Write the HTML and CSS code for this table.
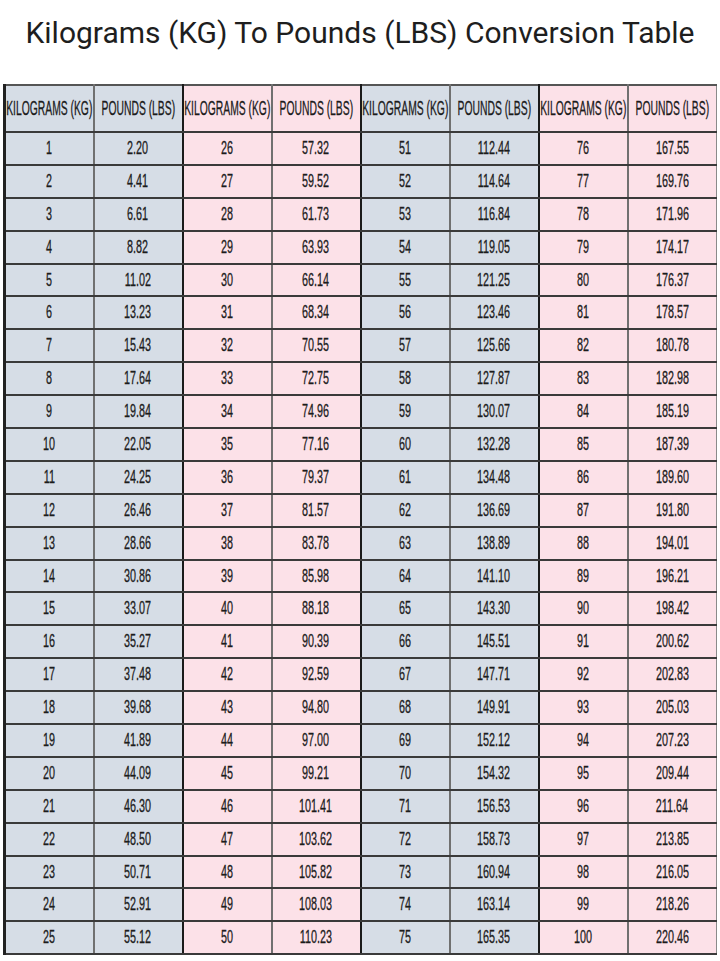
FILE: index.html
```html
<!DOCTYPE html>
<html>
<head>
<meta charset="utf-8">
<link rel="stylesheet" href="styles.css">
</head>
<body>
<h1 class="title">Kilograms (KG) To Pounds (LBS) Conversion Table</h1>
<table class="conv">
<thead>
<tr>
<th class="b"><div class="c"><span class="h">KILOGRAMS (KG)</span></div></th>
<th class="b"><div class="c"><span class="h">POUNDS (LBS)</span></div></th>
<th class="p g"><div class="c"><span class="h">KILOGRAMS (KG)</span></div></th>
<th class="p"><div class="c"><span class="h">POUNDS (LBS)</span></div></th>
<th class="b g"><div class="c"><span class="h">KILOGRAMS (KG)</span></div></th>
<th class="b"><div class="c"><span class="h">POUNDS (LBS)</span></div></th>
<th class="p g"><div class="c"><span class="h">KILOGRAMS (KG)</span></div></th>
<th class="p"><div class="c"><span class="h">POUNDS (LBS)</span></div></th>
</tr>
</thead>
<tbody>
<tr><td class="b"><div class="c"><span class="n">1</span></div></td><td class="b"><div class="c"><span class="n">2.20</span></div></td><td class="p g"><div class="c"><span class="n">26</span></div></td><td class="p"><div class="c"><span class="n">57.32</span></div></td><td class="b g"><div class="c"><span class="n">51</span></div></td><td class="b"><div class="c"><span class="n">112.44</span></div></td><td class="p g"><div class="c"><span class="n">76</span></div></td><td class="p"><div class="c"><span class="n">167.55</span></div></td></tr>
<tr><td class="b"><div class="c"><span class="n">2</span></div></td><td class="b"><div class="c"><span class="n">4.41</span></div></td><td class="p g"><div class="c"><span class="n">27</span></div></td><td class="p"><div class="c"><span class="n">59.52</span></div></td><td class="b g"><div class="c"><span class="n">52</span></div></td><td class="b"><div class="c"><span class="n">114.64</span></div></td><td class="p g"><div class="c"><span class="n">77</span></div></td><td class="p"><div class="c"><span class="n">169.76</span></div></td></tr>
<tr><td class="b"><div class="c"><span class="n">3</span></div></td><td class="b"><div class="c"><span class="n">6.61</span></div></td><td class="p g"><div class="c"><span class="n">28</span></div></td><td class="p"><div class="c"><span class="n">61.73</span></div></td><td class="b g"><div class="c"><span class="n">53</span></div></td><td class="b"><div class="c"><span class="n">116.84</span></div></td><td class="p g"><div class="c"><span class="n">78</span></div></td><td class="p"><div class="c"><span class="n">171.96</span></div></td></tr>
<tr><td class="b"><div class="c"><span class="n">4</span></div></td><td class="b"><div class="c"><span class="n">8.82</span></div></td><td class="p g"><div class="c"><span class="n">29</span></div></td><td class="p"><div class="c"><span class="n">63.93</span></div></td><td class="b g"><div class="c"><span class="n">54</span></div></td><td class="b"><div class="c"><span class="n">119.05</span></div></td><td class="p g"><div class="c"><span class="n">79</span></div></td><td class="p"><div class="c"><span class="n">174.17</span></div></td></tr>
<tr><td class="b"><div class="c"><span class="n">5</span></div></td><td class="b"><div class="c"><span class="n">11.02</span></div></td><td class="p g"><div class="c"><span class="n">30</span></div></td><td class="p"><div class="c"><span class="n">66.14</span></div></td><td class="b g"><div class="c"><span class="n">55</span></div></td><td class="b"><div class="c"><span class="n">121.25</span></div></td><td class="p g"><div class="c"><span class="n">80</span></div></td><td class="p"><div class="c"><span class="n">176.37</span></div></td></tr>
<tr><td class="b"><div class="c"><span class="n">6</span></div></td><td class="b"><div class="c"><span class="n">13.23</span></div></td><td class="p g"><div class="c"><span class="n">31</span></div></td><td class="p"><div class="c"><span class="n">68.34</span></div></td><td class="b g"><div class="c"><span class="n">56</span></div></td><td class="b"><div class="c"><span class="n">123.46</span></div></td><td class="p g"><div class="c"><span class="n">81</span></div></td><td class="p"><div class="c"><span class="n">178.57</span></div></td></tr>
<tr><td class="b"><div class="c"><span class="n">7</span></div></td><td class="b"><div class="c"><span class="n">15.43</span></div></td><td class="p g"><div class="c"><span class="n">32</span></div></td><td class="p"><div class="c"><span class="n">70.55</span></div></td><td class="b g"><div class="c"><span class="n">57</span></div></td><td class="b"><div class="c"><span class="n">125.66</span></div></td><td class="p g"><div class="c"><span class="n">82</span></div></td><td class="p"><div class="c"><span class="n">180.78</span></div></td></tr>
<tr><td class="b"><div class="c"><span class="n">8</span></div></td><td class="b"><div class="c"><span class="n">17.64</span></div></td><td class="p g"><div class="c"><span class="n">33</span></div></td><td class="p"><div class="c"><span class="n">72.75</span></div></td><td class="b g"><div class="c"><span class="n">58</span></div></td><td class="b"><div class="c"><span class="n">127.87</span></div></td><td class="p g"><div class="c"><span class="n">83</span></div></td><td class="p"><div class="c"><span class="n">182.98</span></div></td></tr>
<tr><td class="b"><div class="c"><span class="n">9</span></div></td><td class="b"><div class="c"><span class="n">19.84</span></div></td><td class="p g"><div class="c"><span class="n">34</span></div></td><td class="p"><div class="c"><span class="n">74.96</span></div></td><td class="b g"><div class="c"><span class="n">59</span></div></td><td class="b"><div class="c"><span class="n">130.07</span></div></td><td class="p g"><div class="c"><span class="n">84</span></div></td><td class="p"><div class="c"><span class="n">185.19</span></div></td></tr>
<tr><td class="b"><div class="c"><span class="n">10</span></div></td><td class="b"><div class="c"><span class="n">22.05</span></div></td><td class="p g"><div class="c"><span class="n">35</span></div></td><td class="p"><div class="c"><span class="n">77.16</span></div></td><td class="b g"><div class="c"><span class="n">60</span></div></td><td class="b"><div class="c"><span class="n">132.28</span></div></td><td class="p g"><div class="c"><span class="n">85</span></div></td><td class="p"><div class="c"><span class="n">187.39</span></div></td></tr>
<tr><td class="b"><div class="c"><span class="n">11</span></div></td><td class="b"><div class="c"><span class="n">24.25</span></div></td><td class="p g"><div class="c"><span class="n">36</span></div></td><td class="p"><div class="c"><span class="n">79.37</span></div></td><td class="b g"><div class="c"><span class="n">61</span></div></td><td class="b"><div class="c"><span class="n">134.48</span></div></td><td class="p g"><div class="c"><span class="n">86</span></div></td><td class="p"><div class="c"><span class="n">189.60</span></div></td></tr>
<tr><td class="b"><div class="c"><span class="n">12</span></div></td><td class="b"><div class="c"><span class="n">26.46</span></div></td><td class="p g"><div class="c"><span class="n">37</span></div></td><td class="p"><div class="c"><span class="n">81.57</span></div></td><td class="b g"><div class="c"><span class="n">62</span></div></td><td class="b"><div class="c"><span class="n">136.69</span></div></td><td class="p g"><div class="c"><span class="n">87</span></div></td><td class="p"><div class="c"><span class="n">191.80</span></div></td></tr>
<tr><td class="b"><div class="c"><span class="n">13</span></div></td><td class="b"><div class="c"><span class="n">28.66</span></div></td><td class="p g"><div class="c"><span class="n">38</span></div></td><td class="p"><div class="c"><span class="n">83.78</span></div></td><td class="b g"><div class="c"><span class="n">63</span></div></td><td class="b"><div class="c"><span class="n">138.89</span></div></td><td class="p g"><div class="c"><span class="n">88</span></div></td><td class="p"><div class="c"><span class="n">194.01</span></div></td></tr>
<tr><td class="b"><div class="c"><span class="n">14</span></div></td><td class="b"><div class="c"><span class="n">30.86</span></div></td><td class="p g"><div class="c"><span class="n">39</span></div></td><td class="p"><div class="c"><span class="n">85.98</span></div></td><td class="b g"><div class="c"><span class="n">64</span></div></td><td class="b"><div class="c"><span class="n">141.10</span></div></td><td class="p g"><div class="c"><span class="n">89</span></div></td><td class="p"><div class="c"><span class="n">196.21</span></div></td></tr>
<tr><td class="b"><div class="c"><span class="n">15</span></div></td><td class="b"><div class="c"><span class="n">33.07</span></div></td><td class="p g"><div class="c"><span class="n">40</span></div></td><td class="p"><div class="c"><span class="n">88.18</span></div></td><td class="b g"><div class="c"><span class="n">65</span></div></td><td class="b"><div class="c"><span class="n">143.30</span></div></td><td class="p g"><div class="c"><span class="n">90</span></div></td><td class="p"><div class="c"><span class="n">198.42</span></div></td></tr>
<tr><td class="b"><div class="c"><span class="n">16</span></div></td><td class="b"><div class="c"><span class="n">35.27</span></div></td><td class="p g"><div class="c"><span class="n">41</span></div></td><td class="p"><div class="c"><span class="n">90.39</span></div></td><td class="b g"><div class="c"><span class="n">66</span></div></td><td class="b"><div class="c"><span class="n">145.51</span></div></td><td class="p g"><div class="c"><span class="n">91</span></div></td><td class="p"><div class="c"><span class="n">200.62</span></div></td></tr>
<tr><td class="b"><div class="c"><span class="n">17</span></div></td><td class="b"><div class="c"><span class="n">37.48</span></div></td><td class="p g"><div class="c"><span class="n">42</span></div></td><td class="p"><div class="c"><span class="n">92.59</span></div></td><td class="b g"><div class="c"><span class="n">67</span></div></td><td class="b"><div class="c"><span class="n">147.71</span></div></td><td class="p g"><div class="c"><span class="n">92</span></div></td><td class="p"><div class="c"><span class="n">202.83</span></div></td></tr>
<tr><td class="b"><div class="c"><span class="n">18</span></div></td><td class="b"><div class="c"><span class="n">39.68</span></div></td><td class="p g"><div class="c"><span class="n">43</span></div></td><td class="p"><div class="c"><span class="n">94.80</span></div></td><td class="b g"><div class="c"><span class="n">68</span></div></td><td class="b"><div class="c"><span class="n">149.91</span></div></td><td class="p g"><div class="c"><span class="n">93</span></div></td><td class="p"><div class="c"><span class="n">205.03</span></div></td></tr>
<tr><td class="b"><div class="c"><span class="n">19</span></div></td><td class="b"><div class="c"><span class="n">41.89</span></div></td><td class="p g"><div class="c"><span class="n">44</span></div></td><td class="p"><div class="c"><span class="n">97.00</span></div></td><td class="b g"><div class="c"><span class="n">69</span></div></td><td class="b"><div class="c"><span class="n">152.12</span></div></td><td class="p g"><div class="c"><span class="n">94</span></div></td><td class="p"><div class="c"><span class="n">207.23</span></div></td></tr>
<tr><td class="b"><div class="c"><span class="n">20</span></div></td><td class="b"><div class="c"><span class="n">44.09</span></div></td><td class="p g"><div class="c"><span class="n">45</span></div></td><td class="p"><div class="c"><span class="n">99.21</span></div></td><td class="b g"><div class="c"><span class="n">70</span></div></td><td class="b"><div class="c"><span class="n">154.32</span></div></td><td class="p g"><div class="c"><span class="n">95</span></div></td><td class="p"><div class="c"><span class="n">209.44</span></div></td></tr>
<tr><td class="b"><div class="c"><span class="n">21</span></div></td><td class="b"><div class="c"><span class="n">46.30</span></div></td><td class="p g"><div class="c"><span class="n">46</span></div></td><td class="p"><div class="c"><span class="n">101.41</span></div></td><td class="b g"><div class="c"><span class="n">71</span></div></td><td class="b"><div class="c"><span class="n">156.53</span></div></td><td class="p g"><div class="c"><span class="n">96</span></div></td><td class="p"><div class="c"><span class="n">211.64</span></div></td></tr>
<tr><td class="b"><div class="c"><span class="n">22</span></div></td><td class="b"><div class="c"><span class="n">48.50</span></div></td><td class="p g"><div class="c"><span class="n">47</span></div></td><td class="p"><div class="c"><span class="n">103.62</span></div></td><td class="b g"><div class="c"><span class="n">72</span></div></td><td class="b"><div class="c"><span class="n">158.73</span></div></td><td class="p g"><div class="c"><span class="n">97</span></div></td><td class="p"><div class="c"><span class="n">213.85</span></div></td></tr>
<tr><td class="b"><div class="c"><span class="n">23</span></div></td><td class="b"><div class="c"><span class="n">50.71</span></div></td><td class="p g"><div class="c"><span class="n">48</span></div></td><td class="p"><div class="c"><span class="n">105.82</span></div></td><td class="b g"><div class="c"><span class="n">73</span></div></td><td class="b"><div class="c"><span class="n">160.94</span></div></td><td class="p g"><div class="c"><span class="n">98</span></div></td><td class="p"><div class="c"><span class="n">216.05</span></div></td></tr>
<tr><td class="b"><div class="c"><span class="n">24</span></div></td><td class="b"><div class="c"><span class="n">52.91</span></div></td><td class="p g"><div class="c"><span class="n">49</span></div></td><td class="p"><div class="c"><span class="n">108.03</span></div></td><td class="b g"><div class="c"><span class="n">74</span></div></td><td class="b"><div class="c"><span class="n">163.14</span></div></td><td class="p g"><div class="c"><span class="n">99</span></div></td><td class="p"><div class="c"><span class="n">218.26</span></div></td></tr>
<tr><td class="b"><div class="c"><span class="n">25</span></div></td><td class="b"><div class="c"><span class="n">55.12</span></div></td><td class="p g"><div class="c"><span class="n">50</span></div></td><td class="p"><div class="c"><span class="n">110.23</span></div></td><td class="b g"><div class="c"><span class="n">75</span></div></td><td class="b"><div class="c"><span class="n">165.35</span></div></td><td class="p g"><div class="c"><span class="n">100</span></div></td><td class="p"><div class="c"><span class="n">220.46</span></div></td></tr>
</tbody>
</table>
</body>
</html>
```
FILE: styles.css
```css
html, body {
  margin: 0;
  padding: 0;
  background: #ffffff;
}
body {
  width: 720px;
  height: 961px;
  overflow: hidden;
}
.title {
  margin: 0 0 35px 0;
  padding-top: 16px;
  font-family: Roboto, "Liberation Sans", sans-serif;
  font-weight: 400;
  font-size: 30px;
  line-height: 33px;
  color: #1e1e1e;
  text-align: center;
  white-space: nowrap;
}
.conv {
  margin-left: 3px;
  width: 714px;
  table-layout: fixed;
  border-collapse: collapse;
  border-top: 2px solid #555555;
  border-left: 3px solid #222222;
  border-right: 1px solid #8a8a8a;
}
.conv th, .conv td {
  padding: 0;
  border-bottom: 2px solid #3a3a3a;
  border-left: 2px solid #707070;
  overflow: visible;
}
.conv th.g, .conv td.g {
  border-left: 2px solid #1a1a1a;
}
.conv thead tr {
  height: 47px;
}
.conv tbody tr {
  height: 32.9px;
}
.conv .b {
  background: #d6dde6;
}
.conv .p {
  background: #fce1e8;
}
.c {
  display: flex;
  justify-content: center;
  align-items: center;
  white-space: nowrap;
}
.h {
  display: inline-block;
  font-family: "Liberation Sans", Arial, sans-serif;
  font-weight: 400;
  font-size: 19.5px;
  color: #1c1c1c;
  -webkit-text-stroke: 0.3px #1c1c1c;
  transform: scaleX(0.53);
}
.n {
  display: inline-block;
  font-family: "Liberation Sans", Arial, sans-serif;
  font-size: 18px;
  color: #1c1c1c;
  -webkit-text-stroke: 0.3px #1c1c1c;
  transform: scaleX(0.6);
}
```
